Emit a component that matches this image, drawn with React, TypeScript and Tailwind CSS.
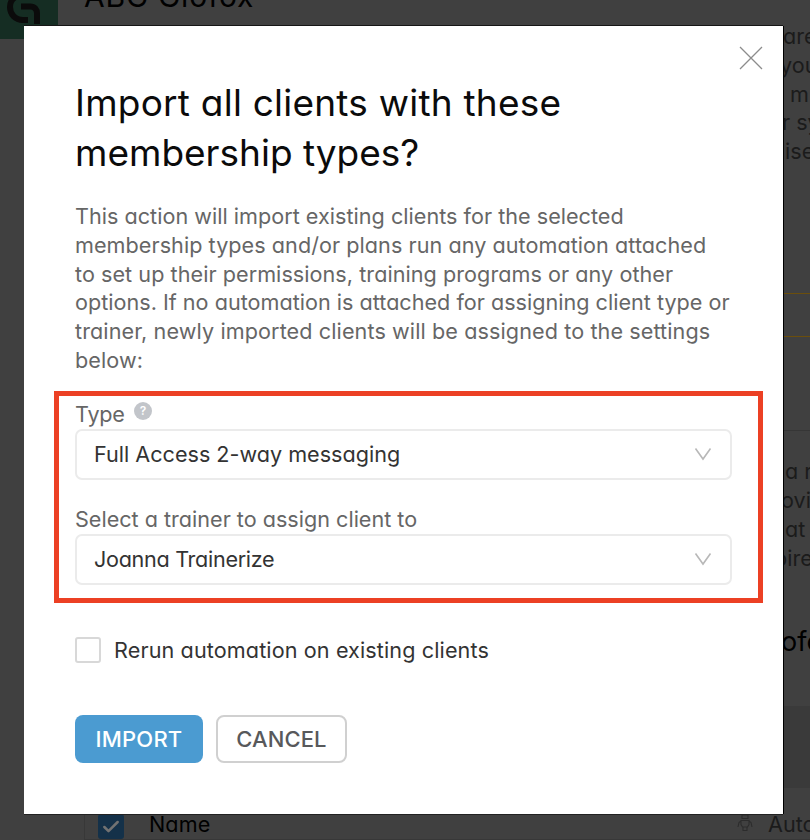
import { Check } from "lucide-react";

interface TextLine {
  text: string;
  className: string;
}

const titleLines: TextLine[] = [
  { text: "Import all clients with these", className: "tracking-[0.23px]" },
  { text: "membership types?", className: "tracking-[0px]" },
];

const bodyLines: TextLine[] = [
  {
    text: "This action will import existing clients for the selected",
    className: "tracking-[0.02px]",
  },
  {
    text: "membership types and/or plans run any automation attached",
    className: "tracking-[0.05px]",
  },
  {
    text: "to set up their permissions, training programs or any other",
    className: "tracking-[0.05px]",
  },
  {
    text: "options. If no automation is attached for assigning client type or",
    className: "tracking-[0.01px]",
  },
  {
    text: "trainer, newly imported clients will be assigned to the settings",
    className: "tracking-[0.1px]",
  },
  { text: "below:", className: "tracking-[0.1px]" },
];

function Lines({ lines }: { lines: TextLine[] }) {
  return lines.map((line) => (
    <span key={line.text} className={`block w-max ${line.className}`}>
      {line.text}
    </span>
  ));
}

function Select({ value, className }: { value: string; className: string }) {
  return (
    <button className="flex h-[51px] w-[657px] items-center justify-between rounded-[7px] border-2 border-[#ebebeb] bg-white pr-[18px] pl-[17px] text-[#333]">
      <span className={className}>{value}</span>
      <svg width="18" height="14" viewBox="0 0 18 14" fill="none">
        <path d="M1.5 1.5 9 12 16.5 1.5" stroke="#b8b8b8" strokeWidth="1.6" />
      </svg>
    </button>
  );
}

function RobotIcon({ className }: { className: string }) {
  return (
    <svg
      width="16"
      height="18"
      viewBox="0 0 16 18"
      fill="none"
      stroke="#2c2c2c"
      strokeWidth="1.1"
      className={className}
    >
      <path d="M5 1h6v3.500H5zM4 6.500h8v4L10.500 13h-5L4 10.500zM4 7 2 8.500 1 13M12 7 14 8.500 15 13M6 13v3.500h4V13" />
    </svg>
  );
}

// Page behind the modal, already dimmed by the backdrop
function Backdrop() {
  return (
    <div className="flex h-full flex-col text-[21.6px] text-[#1b1b1b]">
      <div className="flex h-[22px]">
        <div className="h-[39px] w-[58px] overflow-hidden bg-[#152d23]">
          <svg width="58" height="39" viewBox="0 0 58 39" fill="none">
            <path
              d="M25 -5C15 -5 10 0 10 7s5 13 13 13h5M21 6.500h9c5 0 7 3 7 7V24"
              stroke="#0b0b0b"
              strokeWidth="6"
            />
          </svg>
        </div>
        <div className="ml-[26px] -mt-[22px] h-[36px] text-[30px] leading-[36px] tracking-[0.8px] text-black">
          ABC Glofox
        </div>
      </div>
      <div className="ml-[783px] h-[792px] overflow-hidden whitespace-nowrap">
        <div className="leading-[28.8px]">
          <p>are</p>
          <p className="-ml-[3px]">you</p>
          <p className="ml-[7px]">m</p>
          <p className="-ml-px">r sy</p>
          <p className="ml-[2px]">ise</p>
        </div>
        <div className="mt-[127px] h-[44px] border-y border-[#6b4e0c]" />
        <div className="mt-[93px] border-t border-[#363636] pt-[26px] leading-[29px]">
          <p className="ml-[2px]">a r</p>
          <p className="-ml-[2px]">ovi</p>
          <p className="ml-[2px]">at</p>
          <p className="-ml-[9px]">pire</p>
        </div>
        <p className="mt-[52px] -ml-[2px] text-[27px] leading-[34px] text-black">
          ofo
        </p>
        <div className="mt-[47px] h-[82px] bg-[#3a3a3a]" />
      </div>
      <div className="ml-[84px] flex h-[26px] items-start border-b border-l border-[#383838]">
        <div className="ml-[13px] flex h-[25px] w-[26px] shrink-0 items-center justify-center rounded-[3px] bg-[#143149]">
          <Check className="size-5 text-[#727272]" strokeWidth={3} />
        </div>
        <p className="ml-[25px] -mt-[3px] w-[62px] shrink-0 leading-[26px] tracking-[0.1px] text-black">
          Name
        </p>
        <RobotIcon className="ml-[526px] shrink-0" />
        <p className="ml-[15px] -mt-[3px] shrink-0 leading-[26px]">Auto</p>
      </div>
    </div>
  );
}

function ImportModal() {
  return (
    <div className="absolute top-[26px] left-6 h-[788px] w-[759px] bg-white pl-[51px] shadow-[1px_0_0_#000,0_-1px_0_#161616,0_1px_0_#222]">
      <button className="absolute top-[20px] right-[20px]" aria-label="Close">
        <svg width="24" height="24" viewBox="0 0 24 24" fill="none">
          <path d="m1 1 22 22M23 1 1 23" stroke="#8c8c8c" strokeWidth="1.3" />
        </svg>
      </button>

      <h1 className="pt-[52px] text-[37px] leading-[50px] text-[#0b0b0b]">
        <Lines lines={titleLines} />
      </h1>
      <p className="mt-[24px] leading-[28.8px] text-[#666]">
        <Lines lines={bodyLines} />
      </p>

      <div className="mt-[25px] flex h-[29px] leading-[29px] text-[#666]">
        <span className="w-[49px] tracking-[-0.2px]">Type</span>
        <span className="mt-[2px] ml-[10px] flex size-[18px] items-center justify-center rounded-full bg-[#c2c5ca] text-[12px] font-semibold text-white">
          ?
        </span>
      </div>
      <Select value="Full Access 2-way messaging" className="tracking-[0px]" />

      <div className="mt-[25px] h-[29px] leading-[29px] text-[#666]">
        <span>Select a trainer to assign client to</span>
      </div>
      <Select value="Joanna Trainerize" className="tracking-[-0.3px]" />

      <label className="mt-[52px] flex h-[26px] items-center text-[#333]">
        <span className="size-[26px] rounded-[3px] border-2 border-[#d8d8d8]" />
        <span className="ml-[13px] pt-px tracking-[0.11px]">
          Rerun automation on existing clients
        </span>
      </label>

      <div className="mt-[52px] flex gap-[13px] text-[22px] font-medium">
        <button className="h-[48px] w-[128px] rounded-[8px] bg-[#4b9bd1] pt-px text-white">
          <span className="tracking-[0.2px]">IMPORT</span>
        </button>
        <button className="h-[48px] w-[131px] rounded-[8px] border-2 border-[#d0d0d0] pt-px text-[#58595b]">
          <span className="tracking-[0.1px]">CANCEL</span>
        </button>
      </div>

      {/* Highlight around the two selects */}
      <div className="pointer-events-none absolute top-[365px] left-[30px] h-[212px] w-[709px] border-5 border-[#ec4024]" />
    </div>
  );
}

export default function App() {
  return (
    <div className="relative h-[840px] w-[810px] overflow-hidden bg-[#404040] font-['Inter',sans-serif] text-[21.6px] [font-feature-settings:'cv11']">
      <Backdrop />
      <ImportModal />
    </div>
  );
}
